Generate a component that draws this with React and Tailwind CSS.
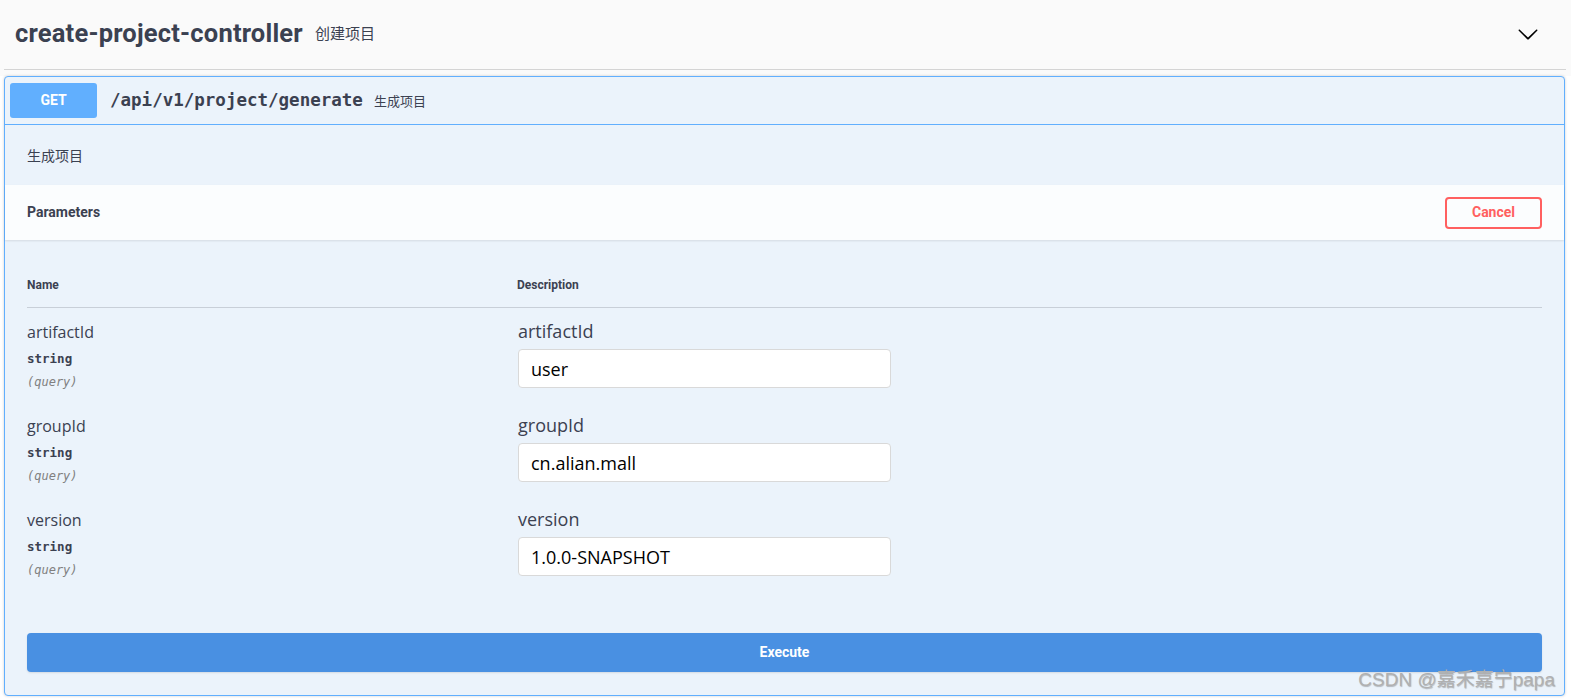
import React from 'react';

const params = [
  { name: 'artifactId', type: 'string', value: 'user' },
  { name: 'groupId', type: 'string', value: 'cn.alian.mall' },
  { name: 'version', type: 'string', value: '1.0.0-SNAPSHOT' },
];

const mono = "font-['DejaVu_Sans_Mono','Liberation_Mono',monospace]";

const App = () => {
  return (
    <div className="relative min-h-screen bg-white text-[#3b4151] font-['Open_Sans','Noto_Sans_CJK_SC',sans-serif]">
      {/* Tag header */}
      <div className="bg-[#fafafa] pb-[6px]">
        <div className="ml-[4px] mr-[5px] h-[70px] flex items-center justify-between border-b border-[#d4d4d4] pl-[11px] pr-[27px] pb-[2px]">
          <div className="flex items-center gap-[12px]">
            <h3 className="text-[25.5px] font-bold tracking-[0.2px] font-['Roboto','Noto_Sans_CJK_SC',sans-serif] text-[#3b4151]">
              create-project-controller
            </h3>
            <span className="text-[15px] text-[#3b4151] font-['Noto_Sans_CJK_SC',sans-serif]">创建项目</span>
          </div>
          <svg width="22" height="22" viewBox="0 0 20 20" className="text-black">
            <path
              fill="currentColor"
              d="M17.418 6.109c.272-.268.709-.268.979 0s.271.701 0 .969l-7.908 7.83c-.27.268-.707.268-.979 0l-7.908-7.83c-.27-.268-.27-.701 0-.969.271-.268.709-.268.979 0L10 13.25l7.418-7.141z"
            />
          </svg>
        </div>
      </div>

      {/* Operation block */}
      <div className="ml-[4px] mr-[6px] border border-[#61affe] rounded-[4px] bg-[#ebf3fb] shadow-[0_0_3px_rgba(0,0,0,0.19)]">
        <div className="flex items-center pt-[6px] pb-[6px] px-[5px] border-b border-[#61affe]">
          <div className="w-[87px] h-[35px] rounded-[3px] bg-[#61affe] flex items-center justify-center text-white text-[14px] font-bold font-['Roboto',sans-serif]">
            GET
          </div>
          <span className={`ml-[13px] text-[17.5px] font-bold text-[#3b4151] ${mono}`}>/api/v1/project/generate</span>
          <span className="ml-[11px] text-[13px] text-[#3b4151] font-['Noto_Sans_CJK_SC',sans-serif]">生成项目</span>
        </div>

        <div className="h-[60px] flex items-center px-[22px] text-[14px] font-['Noto_Sans_CJK_SC',sans-serif]">
          生成项目
        </div>

        <div className="h-[55px] flex items-center justify-between px-[22px] bg-white/80 shadow-[0_1px_2px_rgba(0,0,0,0.1)]">
          <h4 className="text-[14px] font-bold font-['Roboto',sans-serif]">Parameters</h4>
          <button className="w-[97px] h-[32px] rounded-[4px] border-2 border-[#ff6060] text-[#ff6060] text-[14px] font-bold font-['Roboto',sans-serif]">
            Cancel
          </button>
        </div>

        <div className="px-[22px] pt-[37px] pb-[23px]">
          <div className="flex border-b border-[#3b4151]/20 pb-[14px] text-[12px] leading-[16px] font-bold font-['Roboto',sans-serif]">
            <div className="w-[490px]">Name</div>
            <div>Description</div>
          </div>
          <div className="pt-[11px]">
            {params.map((p) => (
              <div key={p.name} className="flex h-[94px]">
                <div className="w-[490px] pt-[2px]">
                  <div className="text-[16px] leading-[22px]">{p.name}</div>
                  <div className={`mt-[7px] text-[12.5px] leading-[18px] font-bold ${mono}`}>{p.type}</div>
                  <div className={`mt-[5px] text-[12px] leading-[18px] italic text-[#808080] ${mono}`}>(query)</div>
                </div>
                <div className="pl-[1px]">
                  <div className="text-[18px] leading-[24px]">{p.name}</div>
                  <input
                    readOnly
                    value={p.value}
                    className="mt-[6px] w-[373px] h-[39px] rounded-[4px] border border-[#d9d9d9] bg-white px-[12px] text-[18px] text-black outline-none"
                  />
                </div>
              </div>
            ))}
          </div>
          <button className="mt-[32px] w-full h-[39px] rounded-[4px] bg-[#4990e2] text-white text-[14px] font-bold font-['Roboto',sans-serif] shadow-[0_1px_2px_rgba(0,0,0,0.1)]">
            Execute
          </button>
        </div>
      </div>

      {/* Watermark */}
      <div className="absolute right-[16px] top-[666px] text-[19px] text-[#b0b0b0] font-['Liberation_Sans','Noto_Sans_CJK_SC',sans-serif] [text-shadow:0.5px_0.5px_1px_rgba(0,0,0,0.25)]">
        CSDN @嘉禾嘉宁papa
      </div>
    </div>
  );
};

export default App;
